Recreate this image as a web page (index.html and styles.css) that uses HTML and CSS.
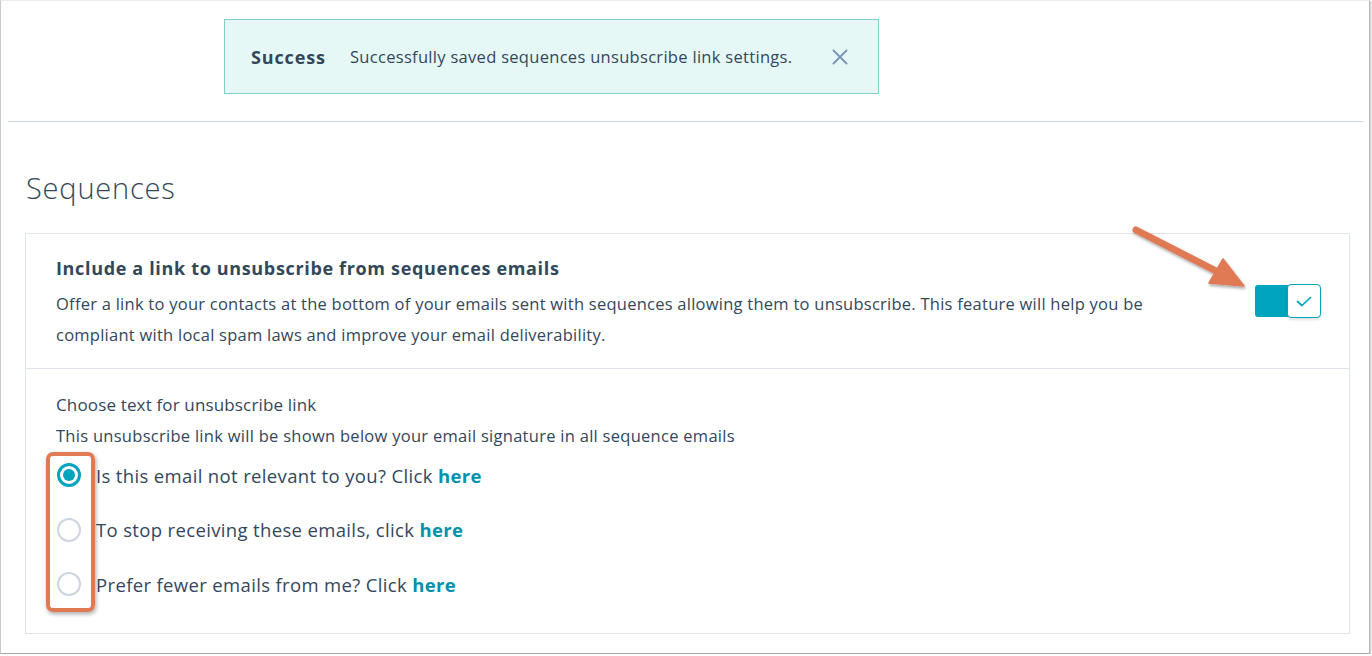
FILE: index.html
```html
<!DOCTYPE html>
<html>
<head>
<meta charset="utf-8">
<link rel="stylesheet" href="styles.css">
</head>
<body>
<div class="frame">
  <div class="top">
    <div class="alert">
      <span class="alert-title">Success</span>
      <span class="alert-text">Successfully saved sequences unsubscribe link settings.</span>
      <svg class="alert-close" width="16" height="16" viewBox="0 0 16 16"><path d="M1.5 1.5 L14.5 14.5 M14.5 1.5 L1.5 14.5" stroke="#7c98b6" stroke-width="2" stroke-linecap="round" fill="none"/></svg>
    </div>
  </div>
  <div class="main">
    <h1 class="page-title">Sequences</h1>
    <div class="card">
      <div class="section section-toggle">
        <div class="section-body">
          <h2 class="section-title">Include a link to unsubscribe from sequences emails</h2>
          <p class="section-desc">Offer a link to your contacts at the bottom of your emails sent with sequences allowing them to unsubscribe. This feature will help you be compliant with local spam laws and improve your email deliverability.</p>
        </div>
        <div class="toggle">
          <div class="toggle-track"></div>
          <div class="toggle-knob">
            <svg width="16" height="11" viewBox="0 0 16 11"><path d="M1.5 5.5 L6 9.5 L14.5 1.5" stroke="#00a4bd" stroke-width="1.7" fill="none" stroke-linecap="round" stroke-linejoin="round"/></svg>
          </div>
        </div>
      </div>
      <div class="section section-radios">
        <div class="field-label">Choose text for unsubscribe link</div>
        <div class="field-help">This unsubscribe link will be shown below your email signature in all sequence emails</div>
        <div class="radio-list">
          <label class="radio-row"><span class="radio radio-on"><span class="radio-dot"></span></span><span class="radio-label">Is this email not relevant to you? Click <b class="link">here</b></span></label>
          <label class="radio-row"><span class="radio"></span><span class="radio-label">To stop receiving these emails, click <b class="link">here</b></span></label>
          <label class="radio-row"><span class="radio"></span><span class="radio-label">Prefer fewer emails from me? Click <b class="link">here</b></span></label>
        </div>
      </div>
    </div>
  </div>
  <div class="highlight-box"></div>
  <svg class="arrow" width="140" height="90" viewBox="0 0 140 90">
    <defs>
      <filter id="sh" x="-20%" y="-20%" width="150%" height="160%">
        <feDropShadow dx="1" dy="2" stdDeviation="1.5" flood-color="#000" flood-opacity="0.35"/>
      </filter>
    </defs>
    <g filter="url(#sh)" fill="#e07a55" stroke="#e07a55">
      <line x1="16" y1="15" x2="100" y2="58" stroke-width="7" stroke-linecap="round"/>
      <polygon points="124,71 89,68 103,44" stroke-width="1.5" stroke-linejoin="round"/>
    </g>
  </svg>
</div>
</body>
</html>
```

FILE: styles.css
```css
* { box-sizing: border-box; }

html, body {
  margin: 0;
  padding: 0;
  background: #ffffff;
}

body {
  font-family: "Open Sans", "Liberation Sans", sans-serif;
  color: #33475b;
}

.frame {
  position: relative;
  width: 1370px;
  height: 654px;
  border-left: 1px solid #c9c9c9;
  border-top: 1px solid #ececec;
  border-right: 1px solid #b9b9b9;
  border-bottom: 1px solid #a9a9a9;
  box-shadow: 1px 1px 2px rgba(0, 0, 0, 0.25);
  padding: 0 6px 0 7px;
  overflow: hidden;
}

.top {
  height: 121px;
  border-bottom: 1px solid #cbd6e2;
  padding-top: 18px;
  padding-left: 216px;
}

.alert {
  width: 655px;
  height: 75px;
  background: #e5f8f6;
  border: 1px solid #7fd1c7;
  display: flex;
  align-items: center;
  padding-left: 26px;
}

.alert-title {
  font-weight: 700;
  font-size: 18px;
  letter-spacing: 0.85px;
  color: #33475b;
  width: 99px;
  flex: none;
}

.alert-text {
  font-size: 16.5px;
  letter-spacing: 0.3px;
  color: #33475b;
  flex: none;
}

.alert-close {
  margin-left: 40px;
  flex: none;
}

.main {
  padding: 0 13px 0 17px;
}

.page-title {
  margin: 48px 0 27px 1px;
  font-size: 29px;
  line-height: 36px;
  font-weight: 300;
  color: #33475b;
  letter-spacing: 0.8px;
}

.card {
  border: 1px solid #dfe3eb;
}

.section {
  padding: 0 28px 0 30px;
}

.section-toggle {
  display: flex;
  align-items: center;
  padding-top: 22px;
  padding-bottom: 18px;
  border-bottom: 1px solid #dfe3eb;
}

.section-body {
  flex: 1;
}

.section-title {
  margin: 0;
  font-size: 18px;
  line-height: 24px;
  font-weight: 700;
  color: #33475b;
  letter-spacing: 0.66px;
}

.section-desc {
  margin: 8px 0 0;
  max-width: 1110px;
  font-size: 16.5px;
  line-height: 31px;
  color: #33475b;
  letter-spacing: 0.25px;
}

.toggle {
  position: relative;
  width: 66px;
  height: 34px;
  flex: none;
  margin-left: 40px;
  margin-bottom: 4px;
}

.toggle-track {
  width: 64px;
  height: 32px;
  margin-top: 1px;
  background: #00a4bd;
  border-radius: 3px;
}

.toggle-knob {
  position: absolute;
  top: 0;
  right: 0;
  width: 34px;
  height: 34px;
  background: #ffffff;
  border: 1px solid #00a4bd;
  border-radius: 4px;
  display: flex;
  align-items: center;
  justify-content: center;
  box-shadow: 0 2px 3px rgba(0, 0, 0, 0.12);
}

.section-radios {
  padding-top: 24px;
  padding-bottom: 21px;
}

.field-label {
  font-size: 17px;
  line-height: 24px;
  letter-spacing: 0.15px;
}

.field-help {
  margin-top: 7px;
  font-size: 16.5px;
  line-height: 24px;
  letter-spacing: 0.28px;
}

.radio-list {
  display: flex;
  flex-direction: column;
}

.radio-row {
  display: flex;
  align-items: center;
  height: 54.5px;
}

.radio {
  width: 24px;
  height: 24px;
  margin-left: 1px;
  margin-right: 15px;
  border: 2px solid #cbd6e2;
  border-radius: 50%;
  display: flex;
  align-items: center;
  justify-content: center;
  flex: none;
}

.radio-on {
  border: 3px solid #00a4bd;
}

.radio-dot {
  width: 12px;
  height: 12px;
  border-radius: 50%;
  background: #00a4bd;
}

.radio-label {
  font-size: 18.5px;
  letter-spacing: 0.35px;
  color: #33475b;
}

.link {
  color: #0091ae;
  font-weight: 700;
}

.highlight-box {
  position: absolute;
  left: 45px;
  top: 451px;
  width: 49px;
  height: 160px;
  border: 4px solid #e07a55;
  border-radius: 7px;
  box-shadow: 1px 2px 4px rgba(0, 0, 0, 0.35);
}

.arrow {
  position: absolute;
  left: 1119px;
  top: 214px;
}
```
